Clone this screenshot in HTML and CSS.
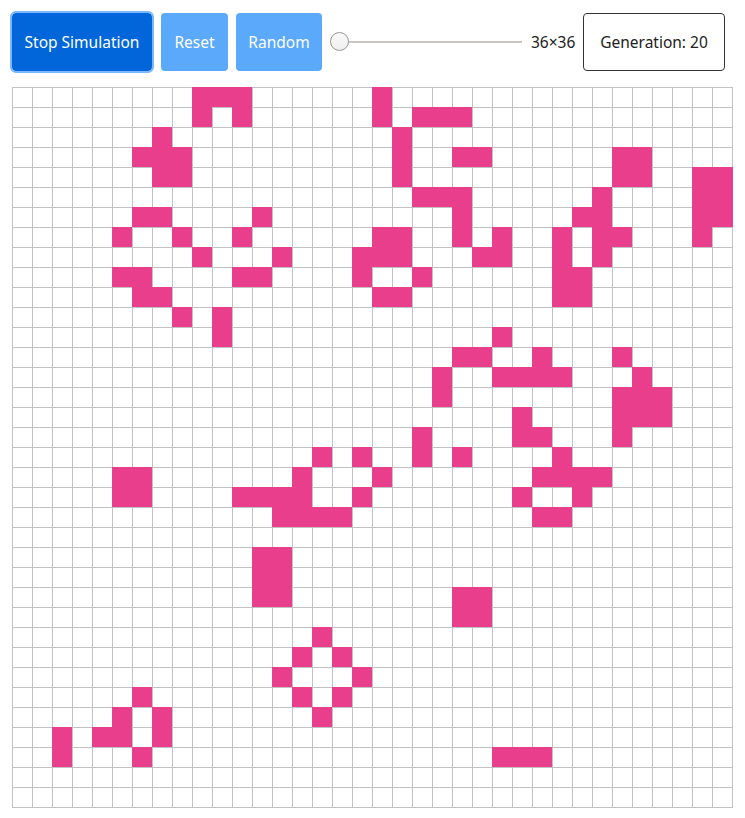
FILE: index.html
```html
<!DOCTYPE html>
<html lang="en">
<head>
<meta charset="utf-8">
<title>Game of Life</title>
<link rel="stylesheet" href="styles.css">
</head>
<body>
<div class="app">
  <div class="toolbar">
    <button class="btn btn-primary btn-stop">Stop Simulation</button>
    <button class="btn btn-light btn-reset">Reset</button>
    <button class="btn btn-light btn-random">Random</button>
    <input class="size-slider" type="range" min="10" max="100" value="10">
    <span class="size-label">36×36</span>
    <div class="generation">Generation: 20</div>
  </div>
  <div class="board" id="board"></div>
</div>
<script src="script.js"></script>
</body>
</html>
```
FILE: styles.css
```css
* { box-sizing: border-box; }
body {
  margin: 0;
  background: #fff;
  font-family: "Noto Sans", "Open Sans", sans-serif;
  color: #222;
}
.app {
  padding: 13px 12px;
}
.toolbar {
  display: flex;
  align-items: center;
  gap: 8px;
  height: 58px;
  white-space: nowrap;
}
.btn {
  flex: none;
  height: 58px;
  padding: 0;
  border: none;
  border-radius: 4px;
  color: #fff;
  font-family: inherit;
  font-size: 15.5px;
  text-align: center;
  cursor: pointer;
}
.btn-stop { width: 140px; }
.btn-reset { width: 67px; margin-left: 1px; }
.btn-random { width: 86px; }
.btn-primary {
  background: #0066d9;
  outline: 2px solid #7ab8ff;
  outline-offset: 0;
}
.btn-light {
  background: #5aa9fb;
}
.size-slider {
  flex: none;
  -webkit-appearance: none;
  appearance: none;
  width: 192px;
  height: 20px;
  margin: 0;
  background: transparent;
}
.size-slider::-webkit-slider-runnable-track {
  height: 2px;
  background: #cbc6c2;
}
.size-slider::-webkit-slider-thumb {
  -webkit-appearance: none;
  width: 19px;
  height: 19px;
  margin-top: -9px;
  border-radius: 50%;
  border: 1px solid #9a9693;
  background: linear-gradient(#fafafa, #eeeeee);
}
.size-label {
  flex: none;
  width: 44px;
  margin-left: 1px;
  font-size: 15.5px;
}
.generation {
  flex: none;
  width: 142px;
  height: 58px;
  display: flex;
  align-items: center;
  justify-content: center;
  border: 1px solid #333;
  border-radius: 4px;
  font-size: 15.5px;
}
.board {
  margin-top: 16px;
  display: grid;
  grid-template-columns: repeat(36, 20px);
  grid-auto-rows: 20px;
  width: 721px;
}
.cell {
  width: 21px;
  height: 21px;
  border: 1px solid #c2c2c2;
  background: #fff;
}
.cell.alive {
  background: #e83e8c;
  border-color: #e83e8c;
}
```
FILE: script.js
```js
var live = {
  0: [9,10,11,18],
  1: [9,11,18,20,21,22],
  2: [7,19],
  3: [6,7,8,19,22,23,30,31],
  4: [7,8,19,30,31,34,35],
  5: [20,21,22,29,34,35],
  6: [6,7,12,22,28,29,34,35],
  7: [5,8,11,18,19,22,24,27,29,30,34],
  8: [9,13,17,18,19,23,24,27,29],
  9: [5,6,11,12,17,20,27,28],
  10: [6,7,18,19,27,28],
  11: [8,10],
  12: [10,24],
  13: [22,23,26,30],
  14: [21,24,25,26,27,31],
  15: [21,30,31,32],
  16: [25,30,31,32],
  17: [20,25,26,30],
  18: [15,17,20,22,27],
  19: [5,6,14,18,26,27,28,29],
  20: [5,6,11,12,13,14,17,25,28],
  21: [13,14,15,16,26,27],
  23: [12,13],
  24: [12,13],
  25: [12,13,22,23],
  26: [22,23],
  27: [15],
  28: [14,16],
  29: [13,17],
  30: [6,14,16],
  31: [5,7,15],
  32: [2,4,5,7],
  33: [2,6,24,25,26]
};
var board = document.getElementById('board');
var frag = document.createDocumentFragment();
for (var r = 0; r < 36; r++) {
  var row = live[r] || [];
  for (var c = 0; c < 36; c++) {
    var d = document.createElement('div');
    d.className = row.indexOf(c) >= 0 ? 'cell alive' : 'cell';
    frag.appendChild(d);
  }
}
board.appendChild(frag);
```
